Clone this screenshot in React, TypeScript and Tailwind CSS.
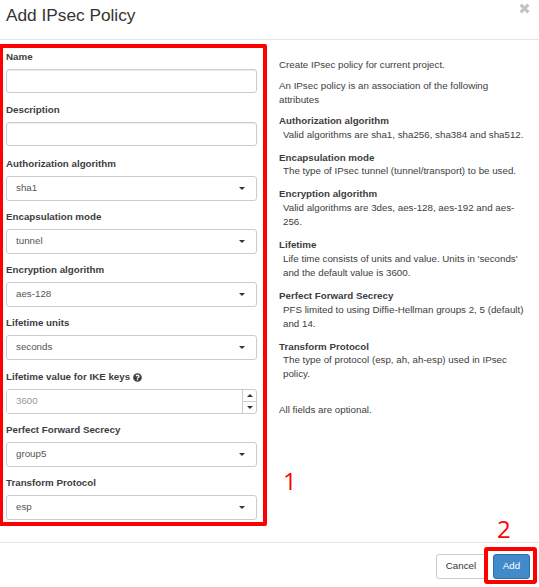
import { FaQuestionCircle } from 'react-icons/fa';

const selects = [
  { label: 'Authorization algorithm', value: 'sha1' },
  { label: 'Encapsulation mode', value: 'tunnel' },
  { label: 'Encryption algorithm', value: 'aes-128' },
  { label: 'Lifetime units', value: 'seconds' },
];

const help = [
  { title: 'Authorization algorithm', text: 'Valid algorithms are sha1, sha256, sha384 and sha512.' },
  { title: 'Encapsulation mode', text: 'The type of IPsec tunnel (tunnel/transport) to be used.' },
  { title: 'Encryption algorithm', text: 'Valid algorithms are 3des, aes-128, aes-192 and aes-256.' },
  { title: 'Lifetime', text: "Life time consists of units and value. Units in 'seconds' and the default value is 3600." },
  { title: 'Perfect Forward Secrecy', text: 'PFS limited to using Diffie-Hellman groups 2, 5 (default) and 14.' },
  { title: 'Transform Protocol', text: 'The type of protocol (esp, ah, ah-esp) used in IPsec policy.' },
];

function Caret({ up }: { up?: boolean }) {
  return (
    <svg width="6" height="3" viewBox="0 0 6 3" className="fill-[#333]">
      <path d={up ? 'M0 3 L3 0 L6 3 Z' : 'M0 0 L6 0 L3 3 Z'} />
    </svg>
  );
}

function Field({ label, children }: { label: React.ReactNode; children: React.ReactNode }) {
  return (
    <div className="h-[53.25px]">
      <label className="flex h-[18px] items-start gap-[3px] text-[9.75px] leading-[12px] font-bold text-[#3d3d3d]">{label}</label>
      {children}
    </div>
  );
}

function TextInput() {
  return <input type="text" className="block h-[24px] w-[251px] rounded-[3px] border border-[#ccc] bg-white shadow-[inset_0_1px_1px_rgba(0,0,0,0.075)]" />;
}

function SelectBox({ value }: { value: string }) {
  return (
    <div className="flex h-[25px] w-[251px] items-center justify-between rounded-[3px] border border-[#ccc] bg-white pr-[11px] pl-[9px] text-[9.75px] text-[#555]">
      <span>{value}</span>
      <Caret />
    </div>
  );
}

export default function App() {
  return (
    <div className="relative flex h-[587px] w-[539px] flex-col overflow-hidden bg-white font-['Liberation_Sans',sans-serif] text-[#333]">
      <div className="h-[40px] shrink-0 border-b border-[#e5e5e5] pt-[4px] pl-[6px]">
        <h4 className="text-[17.25px] leading-[22px] text-[#333]">Add IPsec Policy</h4>
      </div>
      <svg viewBox="0 0 10 10" className="absolute top-[3px] left-[519px] h-[11px] w-[11px] stroke-[#c4c4c4]" strokeWidth="3">
        <path d="M1.5 1.5 L8.5 8.5 M8.5 1.5 L1.5 8.5" />
      </svg>

      <div className="flex h-[502px] shrink-0">
        <div className="mt-[4px] ml-[-1px] h-[482px] w-[268px] shrink-0 rounded-[2px] border-4 border-[#f00] pt-[3px] pl-[3px]">
          <Field label="Name"><TextInput /></Field>
          <Field label="Description"><TextInput /></Field>
          {selects.map((s) => (
            <Field key={s.label} label={s.label}><SelectBox value={s.value} /></Field>
          ))}
          <Field label={<>Lifetime value for IKE keys <FaQuestionCircle className="mt-[2px] h-[9px] w-[9px]" /></>}>
            <div className="flex h-[25px] w-[251px] rounded-[3px] border border-[#ccc] bg-white">
              <input placeholder="3600" disabled className="min-w-0 flex-1 bg-white pl-[9px] text-[9.75px] placeholder:text-[#999]" />
              <div className="flex w-[14px] flex-col border-l border-[#ccc]">
                <div className="flex flex-1 items-center justify-center"><Caret up /></div>
                <div className="flex flex-1 items-center justify-center border-t border-[#ccc]"><Caret /></div>
              </div>
            </div>
          </Field>
          <Field label="Perfect Forward Secrecy"><SelectBox value="group5" /></Field>
          <Field label="Transform Protocol"><SelectBox value="esp" /></Field>
        </div>

        <div className="flex-1 pt-[18px] pr-[10px] pl-[12px] text-[9.75px] leading-[13.9px] text-[#3d3d3d]">
          <p className="mb-[7px]">Create IPsec policy for current project.</p>
          <p className="mb-[7px]">An IPsec policy is an association of the following attributes</p>
          {help.map((h) => (
            <dl key={h.title} className="mb-[9px]">
              <dt className="font-bold">{h.title}</dt>
              <dd className="pl-[4px]">{h.text}</dd>
            </dl>
          ))}
          <p className="mt-[22px]">All fields are optional.</p>
        </div>
      </div>

      <div className="flex flex-1 items-start justify-end border-t border-[#e5e5e5] pt-[4px] pr-[2px]">
        <button className="mt-[7px] mr-[-2px] h-[25px] w-[50px] rounded-[3px] border border-[#ccc] bg-white text-[9.75px] text-[#333]">Cancel</button>
        <div className="flex h-[37px] w-[53px] items-end justify-end rounded-[3px] border-4 border-[#f00]">
          <button className="mr-[3px] mb-[1px] h-[25px] w-[37px] shrink-0 rounded-[3px] border border-[#2e6da4] bg-[#428bca] text-[9.75px] text-white">Add</button>
        </div>
      </div>

      <span className="absolute top-[465px] left-[283px] font-['Open_Sans',sans-serif] text-[24px] leading-[32px] text-[#f00]">1</span>
      <span className="absolute top-[513px] left-[497px] font-['Open_Sans',sans-serif] text-[24px] leading-[32px] text-[#f00]">2</span>
    </div>
  );
}
